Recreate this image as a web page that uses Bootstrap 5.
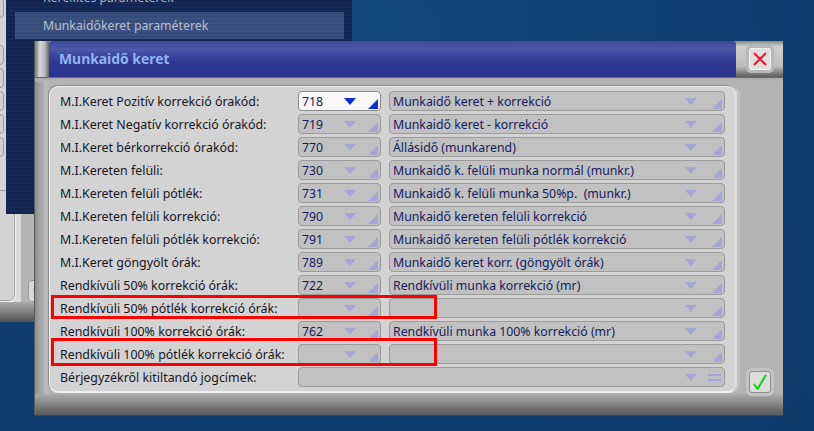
<!DOCTYPE html>
<html lang="hu"><head><meta charset="utf-8"><title>Munkaidő keret</title>
<link href="https://cdn.jsdelivr.net/npm/bootstrap@5.3.0/dist/css/bootstrap.min.css" rel="stylesheet">
<style>
html,body{height:100%;margin:0}
body{overflow:hidden;background:#0f3f70;font-family:"Noto Sans","Liberation Sans",sans-serif;position:relative}
.desk{position:absolute;inset:0;overflow:hidden;background:radial-gradient(ellipse at 45% 10%,#12477a 0,#0e3f70 55%,#0c3a69 100%)}
.bwin{position:absolute;left:0;top:0;width:35px;height:322px;background:#d4d4d4}
.bfoot{position:absolute;left:0;top:302px;width:35px;height:20px;background:linear-gradient(#ababab,#6e6e6e 70%,#505050)}
.bbox{position:absolute;left:-14px;width:18px;height:20px;border:1px solid #9a9a9a;border-radius:4px;background:#d2d2d2}
.bgut{position:absolute;left:15px;top:214px;width:20px;height:88px;background:linear-gradient(90deg,#dcdcdc 0,#dcdcdc 6px,#b4b4b4 6px)}
.bpan{position:absolute;left:-12px;top:190px;width:27px;height:111px;background:#d4d4d4;border:1px solid #a4a4a4;border-radius:6px;box-shadow:0 1px 0 1px #eee}
.bchk{position:absolute;left:28px;top:280px;width:20px;height:22px;border:1px solid #999;border-radius:4px;background:#dadada}
.bdot{position:absolute;left:4px;top:7px;width:2px;height:3px;background:#9ccf9c}
.side{position:absolute;left:6px;top:0;width:346px;height:214px;background:repeating-linear-gradient(#13244e 0,#13244e 2px,#16295a 2px,#16295a 4px)}
.side-item{position:absolute;left:9px;top:12px;width:329px;height:27px;background:repeating-linear-gradient(#364b7a 0,#364b7a 2px,#3c5182 2px,#3c5182 4px);color:#b9c0cd;font-size:12.3px;line-height:27px;padding-left:28px}
.side-prev{position:absolute;left:37px;top:-12px;color:#a9b1c2;font-size:12.3px;line-height:20px}
.win{position:absolute;left:35px;top:41px;width:748px;height:374px;background:#b3b3b3;box-shadow:inset -1px 0 #808080,0 1px #3a4a5c,-1px 0 #5a5a5a}
.win-bar{height:36px}
.grip{width:14px;background:linear-gradient(90deg,#777,#d8d8d8 35%,#b8b8b8 70%,#666),#888}
.title{flex:1 1 0;background:linear-gradient(#3f4a9c 0,#4d58a8 25%,#3f4aa0 35%,#2f3692 60%,#2d3490 100%);color:#8fb5ee;font-weight:700;font-size:13.9px;line-height:36px;padding-left:10px;border-radius:3px 2px 0 0}
.closer{width:47px;background:linear-gradient(#888,#cfcfcf 15%,#bdbdbd 70%,#5c5c5c)}
.close-btn{width:22px;height:22px;background:#dfdfdf;border:1px solid #f2f2f2;outline:3px solid #b8b8b8;border-radius:2px;padding:0}
.win-body{height:338px;background:linear-gradient(#a4a4a4 0,#b3b3b3 3px,rgba(179,179,179,0) 6px,rgba(179,179,179,0) 316px,#a8a8a8 318px,#585858 338px),linear-gradient(90deg,#8c8c8c 0,#a6a6a6 5px,#a6a6a6 8px,#b8b8b8 9px,#b8b8b8 14px,#b3b3b3 15px);padding:9px 0 0 14px;box-shadow:inset 0 1px #6a6a6a}
.panel{position:relative;width:688px;height:307px;flex:none;background:#d3d3d3;border:1px solid #f0f0f0;border-bottom:2px solid #f0f0f0;border-right:3px solid #dedede;border-radius:9px;padding:4px 0 0 0;box-shadow:-1px -1px 0 #8e8e8e,3px 0 0 #c2c2c2}
.frow{height:20px;margin-bottom:3px;margin-left:10px;font-size:12.4px;line-height:20px;color:#16161e}
.lbl{width:238px;white-space:nowrap;flex:none;padding-top:1px}
.combo{height:20px;border:1px solid #9b9b9b;border-radius:4px;background:#c1c1c1;color:#141a5c;font-size:12.3px;line-height:18px;padding:1px 0 0 3px;position:relative;white-space:pre;flex:none}
.cc{width:83px}.cn{width:336px;margin-left:8px}.cw{width:427px}
.combo.act{background:#f8f8f8;border-color:#8a8a8a}
.ar{position:absolute;top:6px;width:12px;height:7px}
.cc .ar{right:24px}.cn .ar,.cw .ar{right:27px}
.cor{position:absolute;right:2px;bottom:1px;width:10px;height:10px}
.eq{position:absolute;right:3px;top:6px;width:13px;height:8px}
.red{position:absolute;left:1px;width:386px;border:3px solid #fb0000;background:transparent}
.ok{flex:none;margin:285px 0 0 12px;width:22px;height:22px;background:#dcdcdc;border:1px solid #8f8f8f;outline:3px solid #c4c4c4;border-radius:3px;padding:0}
</style></head><body>
<div class="desk">
 <div class="bwin"></div><div class="bgut"></div><div class="bpan"></div>
 <div class="bbox" style="top:-2px"></div><div class="bbox" style="top:45px"></div><div class="bbox" style="top:68px"></div><div class="bbox" style="top:91px"></div><div class="bbox" style="top:114px"></div><div class="bbox" style="top:137px"></div>
 <div class="bfoot"></div><div class="bchk"><div class="bdot"></div></div>
 <div class="side"><div class="side-prev">Kerekítés paraméterek</div><div class="side-item">Munkaidőkeret paraméterek</div></div>
</div>
<svg width="0" height="0" class="d-block"><defs>
<polygon id="a" points="0,0 12,0 6,7"/><polygon id="c" points="10,0 10,10 0,10"/>
</defs></svg>
<div class="win">
 <div class="win-bar d-flex">
  <div class="grip"></div>
  <div class="title">Munkaidő keret</div>
  <div class="closer d-flex align-items-center justify-content-center"><button class="close-btn d-flex align-items-center justify-content-center" aria-label="Bezárás"><svg width="14" height="14" viewBox="0 0 14 14"><path d="M1 1 13 13M13 1 1 13" stroke="#f4142a" stroke-width="2"/></svg></button></div>
 </div>
 <div class="win-body d-flex align-items-start">
  <div class="panel" id="p"></div>
  <button class="ok d-flex align-items-center justify-content-center" aria-label="OK"><svg width="16" height="16" viewBox="0 0 16 16"><path d="M2 10 5.500 15 14 1" fill="none" stroke="#12d212" stroke-width="2"/></svg></button>
 </div>
</div>
<script>
const rows=[["M.I.Keret Pozitív korrekció órakód:","718","Munkaidő keret + korrekció"],
["M.I.Keret Negatív korrekció órakód:","719","Munkaidő keret - korrekció"],
["M.I.Keret bérkorrekció órakód:","770","Állásidő (munkarend)"],
["M.I.Kereten felüli:","730","Munkaidő k. felüli munka normál (munkr.)"],
["M.I.Kereten felüli pótlék:","731","Munkaidő k. felüli munka 50%p.  (munkr.)"],
["M.I.Kereten felüli korrekció:","790","Munkaidő kereten felüli korrekció"],
["M.I.Kereten felüli pótlék korrekció:","791","Munkaidő kereten felüli pótlék korrekció"],
["M.I.Keret göngyölt órák:","789","Munkaidő keret korr. (göngyölt órák)"],
["Rendkívüli 50% korrekció órák:","722","Rendkívüli munka korrekció (mr)"],
["Rendkívüli 50% pótlék korrekció órák:","",""],
["Rendkívüli 100% korrekció órák:","762","Rendkívüli munka 100% korrekció (mr)"],
["Rendkívüli 100% pótlék korrekció órák:","",""]];
const ic=(act)=>{const f=act?'#0d2be0':'#a4a6d8';return `<svg class="ar" viewBox="0 0 12 7" fill="${f}"><use href="#a"/></svg><svg class="cor" viewBox="0 0 10 10" fill="${f}"><use href="#c"/></svg>`};
let h='';
rows.forEach((r,i)=>{h+=`<div class="frow d-flex"><div class="lbl">${r[0]}</div><div class="combo cc${i==0?' act':''}">${r[1]}${ic(i==0)}</div><div class="combo cn">${r[2]}${ic(false)}</div></div>`});
h+=`<div class="frow d-flex"><div class="lbl">Bérjegyzékről kitiltandó jogcímek:</div><div class="combo cw"><svg class="ar" viewBox="0 0 12 7" fill="#a4a6d8"><use href="#a"/></svg><svg class="eq" viewBox="0 0 13 8" fill="#a4a6d8"><rect width="13" height="2"/><rect y="5" width="13" height="2"/></svg></div></div>`;
h+=`<div class="red" style="top:208px;height:24px"></div><div class="red" style="top:251px;height:28px"></div>`;
document.getElementById('p').innerHTML=h;
</script>
<script src="https://cdn.jsdelivr.net/npm/bootstrap@5.3.0/dist/js/bootstrap.bundle.min.js"></script>
</body></html>
